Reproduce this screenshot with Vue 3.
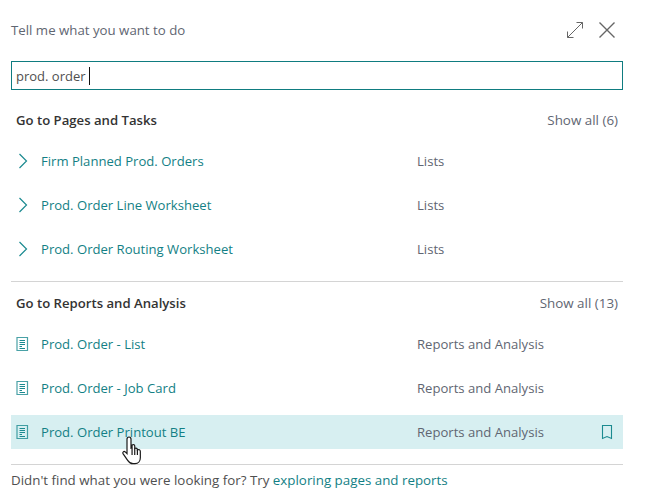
<script setup>
const pages = ['Firm Planned Prod. Orders', 'Prod. Order Line Worksheet', 'Prod. Order Routing Worksheet']
const reports = ['Prod. Order - List', 'Prod. Order - Job Card', 'Prod. Order Printout BE']
</script>

<template>
  <div class="dialog">
    <header class="top">
      <span class="title">Tell me what you want to do</span>
      <div class="actions">
        <svg width="18" height="18" viewBox="0 0 18 18" fill="none" stroke="#666" stroke-width="1">
          <path d="M1.5 16.5 16.5 1.5M10.5 1.5h6v6M1.5 10.5v6h6" />
        </svg>
        <svg width="18" height="18" viewBox="0 0 18 18" fill="none" stroke="#666" stroke-width="1.4">
          <path d="M1.5 1.5 16.5 16.5M16.5 1.5 1.5 16.5" />
        </svg>
      </div>
    </header>

    <div class="search">prod. order<span class="caret"></span></div>

    <section class="section first">
      <div class="head"><h2>Go to Pages and Tasks</h2><span>Show all (6)</span></div>
      <div v-for="p in pages" :key="p" class="row">
        <svg class="icon" width="14" height="16" viewBox="0 0 14 16" fill="none" stroke="#1b8a90" stroke-width="1.2">
          <path d="M3.5 1 10.5 8 3.5 15" />
        </svg>
        <a class="name">{{ p }}</a>
        <span class="kind">Lists</span>
      </div>
    </section>

    <section class="section second">
      <div class="head"><h2>Go to Reports and Analysis</h2><span>Show all (13)</span></div>
      <div v-for="(r, i) in reports" :key="r" class="row" :class="{ active: i === 2 }">
        <svg class="icon" width="14" height="16" viewBox="0 0 14 16" fill="none" stroke="#1b8a90" stroke-width="1">
          <path d="M1 1.5h10.500v13H1z" stroke-width="1.200" stroke-opacity=".8" />
          <path d="M3.500 4.500h5.500M3.500 6.500h5.500M3.500 8.500h5.500M3.500 10.500h2.500M3.500 12.500h5.500" />
        </svg>
        <a class="name">{{ r }}</a>
        <span class="kind">Reports and Analysis</span>
        <svg v-if="i === 2" class="mark" width="12" height="16" viewBox="0 0 12 16" fill="none" stroke="#1b8a90" stroke-width="1.1">
          <path d="M1.5 1.5h9v13L6 12.5 1.5 14.5z" />
        </svg>
        <svg v-if="i === 2" class="cursor" width="24" height="30" viewBox="0 0 18 22.500" fill="#fff" stroke="#1a1a1a" stroke-width=".9">
          <path d="M6 1.5c1 0 1.5.7 1.5 1.7V10l.8-.2V7.5c1.300-.6 2 0 2 .9v1.700c1.200-.5 2 0 2 1 1.200-.4 2.200 0 2.200 1.300V17c0 2.500-1.500 4.500-4 4.500H9c-2 0-3-1-4-2.500l-3.500-5c-.6-1 .6-2.200 1.700-1.300L4.500 14V3.200C4.500 2.200 5 1.500 6 1.500z" />
          <path d="M8.300 10v5M10.300 10v5M12.300 11v4" fill="none" />
        </svg>
      </div>
    </section>

    <footer class="foot">Didn't find what you were looking for? Try <a>exploring pages and reports</a></footer>
  </div>
</template>

<style>
html, body { margin: 0; background: #fff; }
</style>

<style scoped>
.dialog {
  box-sizing: border-box;
  width: 647px;
  height: 489px;
  padding: 0 24px 0 11px;
  overflow: hidden;
  font-family: "Open Sans", "Noto Sans", sans-serif;
  font-size: 13.1px;
  color: #505050;
}
.top {
  height: 61px;
  display: flex;
  align-items: center;
  justify-content: space-between;
}
.title { color: #5f6672; margin-bottom: 1px; font-size: 13.25px; }
.actions { display: flex; gap: 14px; margin-right: 7px; margin-bottom: 2px; }
.search {
  box-sizing: border-box;
  height: 29px;
  border: 1px solid #0f7c80;
  display: flex;
  align-items: center;
  padding-left: 4px;
  font-size: 13px;
  color: #505050;
}
.caret { width: 1px; height: 18px; background: #111; margin-left: 3px; }
.section { padding-bottom: 15px; }
.first { padding-top: 21px; border-bottom: 1px solid #d4d4d4; }
.second { padding-top: 12px; border-bottom: 1px solid #d4d4d4; }
.head {
  display: flex;
  justify-content: space-between;
  padding: 0 5px;
  height: 19px;
  line-height: 19px;
  margin-bottom: 14px;
}
.head h2 { margin: 0; font-size: 13.15px; font-weight: 600; color: #333; }
.head span { color: #5f6672; font-size: 13.4px; }
.row {
  position: relative;
  height: 34px;
  display: flex;
  align-items: center;
  padding: 0 10px 0 5px;
  margin-bottom: 10px;
}
.row:last-child { margin-bottom: 0; }
.active { background: #d7eff1; }
.icon { flex: none; margin-right: 11px; }
.name { width: 376px; flex: none; color: #137f85; }
.kind { flex: 1; color: #5f6672; }
.cursor { position: absolute; left: 110px; top: 20px; }
.foot { padding-top: 7px; line-height: 17px; color: #505050; font-size: 13.35px; }
.foot a { color: #137f85; }
</style>
